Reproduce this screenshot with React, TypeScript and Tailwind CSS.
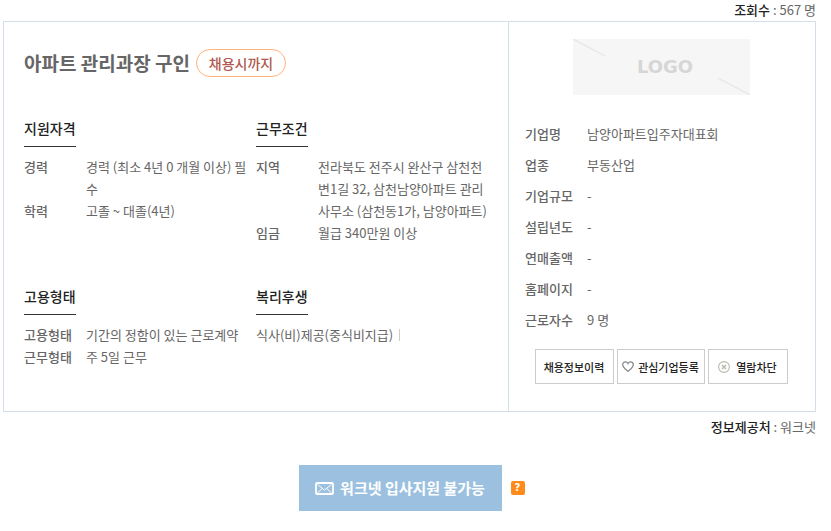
import React from 'react';

const qualification = [
  { label: '경력', value: '경력 (최소 4년 0 개월 이상) 필수' },
  { label: '학력', value: '고졸 ~ 대졸(4년)' },
];

const conditions = [
  { label: '지역', value: '전라북도 전주시 완산구 삼천천변1길 32, 삼천남양아파트 관리사무소 (삼천동1가, 남양아파트)' },
  { label: '임금', value: '월급 340만원 이상' },
];

const employment = [
  { label: '고용형태', value: '기간의 정함이 있는 근로계약' },
  { label: '근무형태', value: '주 5일 근무' },
];

const company = [
  { label: '기업명', value: '남양아파트입주자대표회' },
  { label: '업종', value: '부동산업' },
  { label: '기업규모', value: '-' },
  { label: '설립년도', value: '-' },
  { label: '연매출액', value: '-' },
  { label: '홈페이지', value: '-' },
  { label: '근로자수', value: '9 명' },
];

type Item = { label: string; value: string };

const Section = ({ title, children }: { title: string; children: React.ReactNode }) => (
  <section>
    <h2 className="inline-block border-b border-[#333] pb-[7px] text-[14px] leading-[22px] font-medium text-[#222]">
      {title}
    </h2>
    <div className="mt-[9px]">{children}</div>
  </section>
);

const Details = ({ items }: { items: Item[] }) => (
  <dl>
    {items.map((item) => (
      <div key={item.label} className="flex">
        <dt className="w-[62px] shrink-0 font-medium text-[#666]">{item.label}</dt>
        <dd className="flex-1">{item.value}</dd>
      </div>
    ))}
  </dl>
);

const LogoPlaceholder = () => (
  <svg width="177" height="56" viewBox="0 0 177 56" role="img" aria-label="LOGO">
    <rect width="177" height="56" fill="#f6f6f6" />
    <path d="M0 0L32 17M145 39L177 56" stroke="#e6e6e6" strokeWidth="1.3" />
    <text x="92" y="34" textAnchor="middle" fill="#d6d6d6" fontSize="18" fontWeight="700" fontFamily="DejaVu Sans, sans-serif">
      LOGO
    </text>
  </svg>
);

const HeartIcon = () => (
  <svg width="12" height="11" viewBox="0 0 12 11" fill="none" stroke="#888" strokeWidth="1.3" aria-hidden="true">
    <path d="M6 10.2C4.4 8.8.7 6.4.7 3.7.7 2 1.9.8 3.4.8 4.6.8 5.5 1.4 6 2.5 6.5 1.4 7.4.8 8.6.8c1.5 0 2.7 1.2 2.7 2.9C11.3 6.4 7.6 8.8 6 10.2z" />
  </svg>
);

const BlockIcon = () => (
  <svg width="12" height="12" viewBox="0 0 12 12" fill="none" stroke="#b9b9ad" aria-hidden="true">
    <circle cx="6" cy="6" r="5.4" strokeWidth="1.1" />
    <path d="M4 4l4 4M8 4L4 8" strokeWidth="1.5" />
  </svg>
);

const MailIcon = () => (
  <svg width="19" height="13" viewBox="0 0 19 13" fill="none" stroke="#fff" aria-hidden="true">
    <rect x="1" y="1" width="17" height="11" rx="1" strokeWidth="1.8" />
    <path d="M2.5 2.5l7 5.5 7-5.5M2.5 10.8l4.5-4M16.5 10.8l-4.5-4" strokeWidth="1" />
  </svg>
);

const App = () => {
  return (
    <main className="pl-[3px] pr-[15px] font-['Noto_Sans_CJK_KR','Noto_Sans',sans-serif] text-[13px] leading-[22px] text-[#666]">
      <p className="h-[21px] text-right leading-5">
        <span className="font-medium text-[#222]">조회수</span> : 567 명
      </p>

      <div className="flex border border-[#d3dfe8]">
        <div className="min-w-0 flex-1 px-5 pt-[27px] pb-[43px]">
          <div className="flex items-center gap-1.5">
            <h1 className="text-[19px] leading-7 font-bold text-[#666]">아파트 관리과장 구인</h1>
            <span className="flex h-7 w-[90px] items-center justify-center rounded-full border border-[#ffb27a] text-[14px] font-medium text-[#b0594f]">
              채용시까지
            </span>
          </div>

          <div className="mt-10 grid grid-cols-2 gap-y-[41px]">
            <Section title="지원자격">
              <Details items={qualification} />
            </Section>
            <Section title="근무조건">
              <Details items={conditions} />
            </Section>
            <Section title="고용형태">
              <Details items={employment} />
            </Section>
            <Section title="복리후생">
              <ul className="flex">
                <li className="flex items-center gap-1.5">
                  식사(비)제공(중식비지급)
                  <span className="h-3 w-px bg-[#ccc]" />
                </li>
              </ul>
            </Section>
          </div>
        </div>

        <aside className="w-[307px] shrink-0 border-l border-[#d3dfe8] pt-[17px] pr-[18px] pl-4">
          <div className="flex justify-center">
            <LogoPlaceholder />
          </div>
          <dl className="mt-[23px]">
            {company.map((item) => (
              <div key={item.label} className="flex leading-[31px]">
                <dt className="w-[62px] shrink-0 font-medium text-[#666]">{item.label}</dt>
                <dd>{item.value}</dd>
              </div>
            ))}
          </dl>
          <div className="mt-3.5 flex justify-center gap-[3px] text-[11px] font-medium text-[#222]">
            <button type="button" className="h-[35px] w-[79px] border border-[#ccc]">
              채용정보이력
            </button>
            <button type="button" className="flex h-[35px] w-[88px] items-center justify-center gap-1 border border-[#ccc]">
              <HeartIcon />
              관심기업등록
            </button>
            <button type="button" className="flex h-[35px] w-[80px] items-center justify-center gap-1.5 border border-[#ccc]">
              <BlockIcon />
              열람차단
            </button>
          </div>
        </aside>
      </div>

      <p className="mt-1 text-right">
        <span className="font-medium text-[#222]">정보제공처</span> : 워크넷
      </p>

      <div className="mt-[27px] flex items-center justify-center gap-[9px] pl-1">
        <button
          type="button"
          className="flex h-[46px] w-[203px] items-center justify-center gap-1.5 bg-[#9bc0e0] text-[15px] font-bold text-white"
        >
          <MailIcon />
          워크넷 입사지원 불가능
        </button>
        <button
          type="button"
          aria-label="도움말"
          className="flex size-3.5 items-center justify-center rounded-[2px] bg-[#ff8c1a] font-['DejaVu_Sans',sans-serif] text-[10px] leading-none font-bold text-white"
        >
          ?
        </button>
      </div>
    </main>
  );
};

export default App;
